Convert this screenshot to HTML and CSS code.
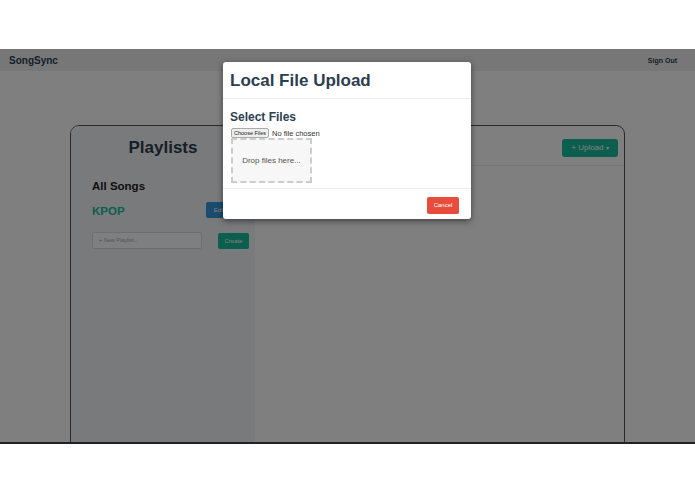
FILE: index.html
```html
<html>
<head>
<title>SongSync</title>
  <link rel="stylesheet" href="styles.css">
</head>

<body>
<div id="app">
  <div class="navbar">
    <span class="brand">SongSync</span>
    <span class="signout">Sign Out</span>
  </div>

  <div class="card">
    <div class="sidebar">
      <h2 class="title">Playlists</h2>
      <div class="list">
        <div class="allsongs">All Songs</div>
        <div class="playlist">
          <span class="name">KPOP</span>
          <span class="btns">
            <span class="btn btn-edit">Edit</span>
            <span class="btn btn-del">X</span>
          </span>
        </div>
        <div class="newrow">
          <div class="input">+ New Playlist...</div>
          <span class="btn btn-create">Create</span>
        </div>
      </div>
    </div>
    <div class="songs">
      <div class="songs-head">
        <span class="btn btn-upload">+ Upload <span class="caret">&#9662;</span></span>
      </div>
    </div>
  </div>

  <!-- modal backdrop + dialog -->
  <div class="backdrop"></div>
  <div class="modal">
    <div class="modal-head">Local File Upload</div>
    <div class="modal-body">
      <div class="subtitle">Select Files</div>
      <div class="fileinput">
        <span class="choose">Choose Files</span>
        <span class="nofile">No file chosen</span>
      </div>
      <div class="dropzone">Drop files here...</div>
    </div>
    <div class="modal-foot">
      <span class="btn btn-cancel">Cancel</span>
    </div>
  </div>
</div>
</body>
</html>
```

FILE: styles.css
```css
body{
  margin: 0;
  padding-top: 49px;
  background: #fff;
  font-family: "Liberation Sans", Arial, sans-serif;
  color: #2c3e50;
}

#app{
  position: relative;
  height: 393px;
  overflow: hidden;
  background: #fff;
  border-bottom: 2px solid #222;
}

.navbar{
  height: 22px;
  background: #eee;
  display: flex;
  align-items: center;
  justify-content: space-between;
  padding: 0 18px 0 9px;
}

.brand{
  font-size: 10px;
  font-weight: bold;
}

.signout{
  font-size: 7px;
  font-weight: bold;
}

.card{
  margin: 54px 0 0 70px;
  width: 553px;
  height: 400px;
  border: 1px solid #555;
  border-radius: 9px;
  display: flex;
}

.sidebar{
  width: 184px;
  background: #f3f5f8;
  border-top-left-radius: 8px;
}

.title{
  margin: 11px 0 0;
  text-align: center;
  font-size: 17px;
  line-height: 22px;
}

.list{
  padding: 0 6px 0 21px;
}

.allsongs{
  margin-top: 21px;
  font-size: 11.5px;
  font-weight: bold;
  color: #222;
}

.playlist{
  margin-top: 10px;
  display: flex;
  justify-content: space-between;
  align-items: center;
  height: 17px;
}

.name{
  font-size: 11.5px;
  font-weight: bold;
  color: #18bc9c;
}

.btns{
  display: flex;
}

.btn{
  display: inline-block;
  color: #fff;
  border-radius: 2px;
  font-size: 6px;
  text-align: center;
}

.btn-edit{
  background: #3498db;
  width: 26px;
  height: 16px;
  line-height: 16px;
}

.btn-del{
  background: #e74c3c;
  width: 17px;
  height: 17px;
  line-height: 17px;
}

.newrow{
  margin-top: 13px;
  display: flex;
  justify-content: space-between;
  align-items: center;
}

.input{
  width: 110px;
  height: 17px;
  box-sizing: border-box;
  border: 1px solid #ddd;
  border-radius: 2px;
  background: #fff;
  color: #aaa;
  font-size: 5.5px;
  line-height: 15px;
  padding-left: 6px;
}

.btn-create{
  background: #18bc9c;
  width: 31px;
  height: 16px;
  line-height: 16px;
}

.songs{
  flex: 1;
}

.songs-head{
  height: 39px;
  border-bottom: 1px solid #eee;
  display: flex;
  justify-content: flex-end;
  align-items: flex-start;
  padding-right: 6px;
}

.btn-upload{
  margin-top: 13px;
  background: #18bc9c;
  width: 56px;
  height: 18px;
  line-height: 18px;
  font-size: 8px;
  border-radius: 3px;
}

.caret{
  font-size: 6px;
}

.backdrop{
  position: absolute;
  left: 0;
  top: 0;
  right: 0;
  bottom: 0;
  background: rgba(0, 0, 0, 0.5);
}

.modal{
  position: absolute;
  left: 223px;
  top: 13px;
  width: 248px;
  background: #fff;
  border-radius: 3px;
  box-shadow: 0 2px 6px rgba(0, 0, 0, 0.5);
}

.modal-head{
  height: 36px;
  padding-left: 7px;
  border-bottom: 1px solid #eee;
  font-size: 17px;
  font-weight: bold;
  line-height: 37px;
}

.modal-body{
  height: 90px;
  padding: 11px 0 0 7px;
  box-sizing: border-box;
  border-bottom: 1px solid #eee;
}

.subtitle{
  font-size: 12px;
  font-weight: bold;
  line-height: 14px;
}

.fileinput{
  margin-top: 4px;
  display: flex;
  align-items: center;
  height: 10px;
}

.choose{
  margin-left: 1px;
  font-size: 5.5px;
  color: #222;
  border: 1px solid #aaa;
  border-radius: 2px;
  background: #eee;
  padding: 0 2px;
  line-height: 8px;
}

.nofile{
  margin-left: 3px;
  font-size: 7.5px;
  color: #333;
}

.dropzone{
  margin-left: 1px;
  width: 81px;
  height: 45px;
  box-sizing: border-box;
  border: 2px dashed #ccc;
  background: #f7f7f7;
  color: #555;
  font-size: 8px;
  line-height: 41px;
  text-align: center;
}

.modal-foot{
  height: 30px;
  display: flex;
  justify-content: flex-end;
  align-items: center;
  padding-right: 12px;
}

.btn-cancel{
  margin-top: 2px;
  background: #e74c3c;
  width: 32px;
  height: 17px;
  line-height: 17px;
  border-radius: 2px;
}
```
